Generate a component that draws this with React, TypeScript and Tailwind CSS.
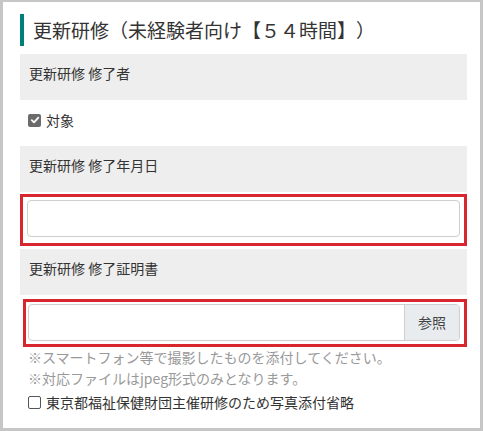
import React from 'react';

const font = { fontFamily: '"Noto Sans CJK JP", "Noto Sans", sans-serif' };

const Label: React.FC<{ text: string }> = ({ text }) => (
  <div className="bg-[#eeeeee] h-[46px] pl-[9px] pt-[9px] text-[14px] leading-[20px] text-[#333]">
    {text}
  </div>
);

const Check: React.FC<{ checked?: boolean }> = ({ checked }) =>
  checked ? (
    <span className="w-[13px] h-[13px] rounded-[2px] bg-[#6b6b6b] flex items-center justify-center shrink-0">
      <svg width="10" height="10" viewBox="0 0 10 10">
        <path d="M1.8 5.2 L4 7.3 L8.3 2.6" fill="none" stroke="#fff" strokeWidth="1.8" strokeLinecap="round" strokeLinejoin="round" />
      </svg>
    </span>
  ) : (
    <span className="w-[13px] h-[13px] rounded-[2px] border border-[#555] bg-white shrink-0" />
  );

export default function App() {
  return (
    <div className="w-[485px] h-[431px] bg-white [text-spacing-trim:space-all]" style={font}>
      <div className="w-[483px] h-[431px] border-[3px] border-t-2 border-[#c6c6c6] pl-[17px] pr-[13px] pt-[12px]">
        {/* Heading */}
        <div className="flex items-center h-[32px]">
          <div className="w-[4px] h-[32px] bg-[#007f76] mr-[9px] shrink-0" />
          <h2 className="text-[19px] leading-[32px] text-[#333] whitespace-nowrap">
            更新研修（未経験者向け【５４時間】）
          </h2>
        </div>

        <div className="mt-[8px]">
          <Label text="更新研修 修了者" />
        </div>

        <div className="h-[46px] pt-[13px] pl-[8px] flex items-start gap-[5px]">
          <div className="flex items-center gap-[5px] h-[14px]">
            <Check checked />
            <span className="text-[14px] leading-[14px] text-[#333]">対象</span>
          </div>
        </div>

        <Label text="更新研修 修了年月日" />

        <div className="mt-[2px] border-[3px] border-[#d7262e] h-[52px] px-[4px] py-[3px]">
          <div className="h-[37px] rounded-[4px] border border-[#cfcfcf] bg-white" />
        </div>

        <div className="mt-[3px]">
          <Label text="更新研修 修了証明書" />
        </div>

        <div className="mt-[4px] ml-[3px] border-[3px] border-[#d7262e] h-[48px] pl-[2px] pr-[4px] py-[2px]">
          <div className="h-[37px] rounded-[4px] border border-[#cfcfcf] bg-white flex overflow-hidden">
            <div className="flex-1" />
            <div className="w-[55px] bg-[#e9ecef] border-l border-[#cfcfcf] flex items-center justify-center text-[14px] text-[#444]">
              参照
            </div>
          </div>
        </div>

        <div className="pl-[8px] text-[14px] leading-[21px] text-[#999]">
          <div>※スマートフォン等で撮影したものを添付してください。</div>
          <div>※対応ファイルはjpeg形式のみとなります。</div>
        </div>

        <div className="pl-[8px] mt-[3px] flex items-center gap-[5px] h-[20px]">
          <Check />
          <span className="text-[14px] text-[#333]">東京都福祉保健財団主催研修のため写真添付省略</span>
        </div>
      </div>
    </div>
  );
}
